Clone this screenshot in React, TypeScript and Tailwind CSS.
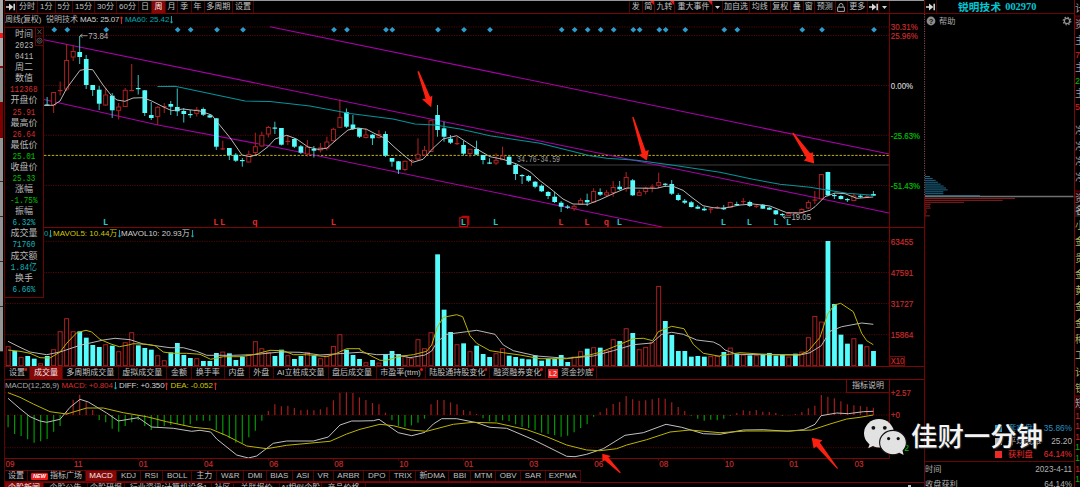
import type { ReactNode } from "react";

const STEP = 6.506;
const X0 = 8.1;
const xAt = (i: number) => X0 + i * STEP;

const CYAN = "#54fcfc";
const RED = "#b42222";
const GRID = "#5c0808";
const FRAME = "#7c0505";

// side, high, body top, body bottom, low; first entry is week index 6
const candles = `c 97 104.5 105.5 106|r 92 92.5 105 113|r 81.5 90 91.5 95.5|r 44 60.5 89 91|r 45.5 51.5 57 61|c 36 52 57 64|c 55 59 85 89|c 85 85 90 96|c 86 89.7 103.7 110|r 88 95 105 106|c 93 95.7 110.3 118|r 103 107 110.3 119.5|r 88 90.3 106.5 107|r 64 90 91 91|c 75 88 89 94.5|c 90 90.3 113 116|c 102 115 118 120|r 106 107.3 116.5 125|r 103 106 107 113|c 101 104 106.7 115|c 88.5 107 111.3 116|c 108 111 114 122.5|c 110 114 115 118|r 107 110 113.3 116.5|c 107.5 109 114.7 116|c 114 115.3 117.5 118|c 118 118.3 146.7 150|r 140.7 148.3 149.3 150|c 148 148 155.3 160|c 153 154.7 160.7 162|c 158 160 161.3 166.7|r 150.7 154.5 162 162.5|r 132.7 146.7 152.5 155|r 131.7 135.3 146 147|r 126 127.5 134 137.5|c 121.7 127.5 128.5 134|c 128 128 144.7 145.5|r 135 140.8 142.3 145|c 138 139 146.7 148|c 145 146.3 152.7 154|r 140 147 154 156.5|c 146 149 150.7 157.5|r 143 148 150 152.5|r 136.7 142 148 150.5|r 127.7 129.3 140.7 141.5|r 99.3 117.6 127.3 128|c 108.5 112 126.7 128|c 115 124.5 129 130|c 128 128.3 136.7 138|r 128.3 135 137.5 138.5|c 134 134.7 138.3 145|r 130 134.5 137.5 138.5|c 131.3 134 155.7 157|c 158 158 161.7 166.7|c 161 161.3 169.7 174|r 160.5 161.3 169.5 171|r 159 160 161 165.7|r 138.3 154.3 159 161|r 146 150.3 155 156|r 119.5 120.7 151.5 152|c 105 115 130 136.7|c 121.7 128.3 136.7 141.7|c 135 138.7 142.7 144|r 136.7 143 144 145|c 140.7 145 153.7 155.3|r 149 149.3 153.5 157.3|c 140.7 149 154.7 155|c 155 155 160 164.3|c 158.3 162.5 163.8 164|r 153.3 160.3 163 165|r 146.7 156 159.7 160|c 156 156.7 164.7 165|c 164 165 174 180|c 174 175 176.3 184|c 175 176 180.7 182|c 181 181.7 186.7 188.3|c 184.3 185.7 191.3 192|c 191 192 196 199|c 191.7 196.7 202 203|c 201 202.7 206.7 212|c 205 206.5 207.5 209|r 205 206.3 208.3 211|r 198 200.5 204.2 205|c 193.7 200 202.3 206|r 188.3 191.5 202 203|c 188.3 192 194.7 196|r 190 192.8 195 196.7|r 181 187.5 192.5 196.7|c 181 186.7 189.3 190|r 172 177.5 188.5 191.7|c 179 180.3 195.3 196|r 190 192.7 195.3 196|r 186.7 188.3 191.5 194.3|r 184.3 186.5 188 192.3|r 172.7 182.5 185.3 188.3|c 183 183.7 184.7 187|c 180 184 193.7 195|c 193.3 195 200 201|c 199 200.7 202.7 204|c 201 202.3 207 207.5|c 205 206.7 208.7 209|c 206.7 208.7 210.3 211|r 208 208.5 210 213.3|r 206 207 208 209|c 205 207.7 209.3 210|r 201.7 202.5 207.5 208|c 201.7 204 205 206|r 198 201 202 204|c 200.7 202 206 207|r 205 205.7 206.7 208|c 204 204.7 208.7 209|c 207 207.7 209.7 210|c 210 210.3 214.3 215|c 213 214 215.3 216.7|r 212 213.5 215.5 216|r 212 212.5 213.5 214|r 208.3 209.5 213 213.5|r 200.3 202.5 208 209|r 191 199.5 200.5 204|r 174 174.5 198.8 199.5|c 171.7 172 195.3 196.3|c 193 195 196 199|c 195 196 199 199.5|c 198 199 200.3 202|r 193.3 196 200.5 201|c 194 195.7 196.7 198|r 195 196 197 198|c 191 194 195.7 196`
  .split("|")
  .map((row) => {
    const [side, ...n] = row.split(" ");
    return { up: side === "r", v: n.map(Number) };
  });

// bar tops in thirds of a pixel below y = 230
const volumes = `349r 363c 381r 378c 386c 400r 378c 358r 304r 265r 304r 304c 323c 345c 351c 343r 347c 364r 337r 307r 346c 354c 359c 376r 391r 367c 339c 375c 384c 385r 393c 393c 369c 365r 370c 390c 380c 374r 334r 355r 366r 378c 359c 376r 387c 378c 366r 377c 385r 377r 348r 313r 359c 375c 387c 397r 390c 398r 372c 363c 372c 376r 385r 328r 355r 307r 73c 239c 306c 343r 340c 364r 347c 372c 381c 370r 355r 377c 381c 386c 388c 376c 392c 387c 387c 375c 396c 380r 364r 356c 352r 353c 361r 328r 333c 295r 309c 358r 351r 337r 168r 273c 315c 363c 363c 380c 378c 380c 378r 378r 366c 353r 371c 374r 376c 376r 373c 369c 377c 374c 380r 371c 365r 322r 258r 275r 33c 222c 314c 341c 325r 343c 349r 363c`
  .split(" ")
  .map((s) => ({ up: s.endsWith("r"), y: 230 + parseInt(s, 10) / 3 }));

const macdBars =
  `592 612 618 628 638 634 627 605 588 543 509 494 517 540 570 577 596 605 588 577 570 588 600 592 588 585 582 588 583 572 572 572 600 615 625 638 640 622 602 572 543 523 529 527 534 541 539 541 538 532 511 488 487 489 502 510 519 523 548 571 588 590 586 578 566 523 510 510 517 523 540 544 552 565 574 575 571 573 583 590 594 601 608 612 616 620 617 607 594 583 560 546 535 522 516 498 508 512 511 508 504 506 517 531 543 557 566 572 569 571 566 557 549 541 543 540 545 546 549 557 556 552 546 535 527 495 500 505 514 523 526 528 530 533`
    .split(" ")
    .map((s) => 230 + Number(s) / 3);

// converts samples taken in three side-by-side panels at triple scale
const seg = (ox: number, s: string) =>
  s
    .split(" ")
    .map((p) => {
      const [x, y] = p.split(",").map(Number);
      return `${(ox + x / 3).toFixed(1)},${(230 + y / 3).toFixed(1)}`;
    })
    .join(" ");

const volYellow = [
  seg(0, "24,360 60,364 90,370 120,383 150,384 180,366 200,340 230,308 258,301 275,306 300,328 330,341 358,350 385,345 400,341 440,343 465,347 490,366 515,370 560,370 600,373 632,388 670,380 720,380 760,374 810,361 850,362 880,374 920,374 980,380 1010,370 1040,356 1080,356"),
  seg(360, "0,360 30,376 60,391 80,391 120,379 160,374 200,364 215,345 232,292 250,262 290,254 308,260 330,317 350,340 390,362 430,368 480,375 540,386 620,386 680,377 720,367 770,347 820,326 850,325 878,332 895,305 935,289 972,296 1000,343 1030,370 1080,379"),
  seg(720, "0,377 60,368 120,372 180,374 240,374 265,363 300,322 323,252 343,225 362,220 400,245 425,310 440,332 460,344"),
].join(" ");
const volWhite = [
  seg(0, "24,334 60,352 90,366 140,374 180,366 240,346 310,330 345,325 390,329 430,342 510,353 550,353 590,364 620,376 700,376 760,374 840,366 900,367 960,375 1080,367"),
  seg(360, "50,374 100,373 150,383 195,375 215,363 232,335 260,313 320,305 350,301 405,313 430,345 460,362 530,378 620,385 700,378 760,362 820,344 875,339 905,313 935,307 970,313 1010,330 1060,336 1080,346"),
  seg(720, "15,360 50,373 120,374 240,375 270,368 304,347 330,304 365,290 425,279 460,283"),
].join(" ");
const diffLine = [
  seg(0, "24,505 60,536 90,560 120,573 140,577 180,568 210,532 240,508 265,516 320,549 355,573 415,563 455,591 520,595 575,604 600,601 632,606 650,627 710,675 745,684 770,678 820,640 860,633 940,633 985,621 1020,585 1055,573 1080,573"),
  seg(360, "40,572 57,568 80,584 115,608 155,617 195,607 220,582 245,566 290,566 350,578 390,592 440,595 520,629 620,679 645,680 680,673 730,656 795,616 850,608 918,583 965,592 1030,611 1080,613"),
  seg(720, "70,600 130,599 205,604 250,599 285,583 303,557 350,549 385,551 430,545 460,544"),
].join(" ");
const deaLine = [
  seg(0, "24,488 60,502 100,522 150,545 200,552 260,534 310,534 370,548 440,560 500,575 580,592 632,597 680,617 740,648 800,656 860,646 990,634 1040,612 1080,598"),
  seg(360, "60,583 100,587 150,600 200,604 280,583 340,577 410,579 500,599 560,620 620,645 680,660 720,662 770,656 800,645 860,629 930,606 990,600 1080,608"),
  seg(720, "80,603 200,603 275,600 330,582 380,567 420,562 460,555"),
].join(" ");

const ma5 =
  "44,105.3 53.3,105.3 60,101 66.7,88.3 80,70.3 86,69.3 92.7,69.7 103,85 111.7,96 117,100 125,101.3 133,98 143,97.7 151.7,101 163,106.7 171.7,110.7 183,109 200,111 211.7,115 218,123 230,137.7 242,155 250,156.7 258,154.3 268,146.7 275,139 286.7,135.3 296.7,139 308,147 318,149.3 326.7,148.3 340,136.7 348,130 358,128 366.7,129.3 375,133.7 385,138.3 395,147.7 406.7,157.7 412.7,162.3 423,159.3 433,148.3 443,139 456.7,135.7 466.7,142.3 478,149.7 490,156.7 503,159.3 516.7,164 530,171.7 540,180.7 550,188.3 563,199 573,204 588,204.3 600,199.7 613,193.7 626.7,188 656.7,188.3 665,186.3 673,186.3 683,190.3 693,198.3 703,205.7 713,207.7 723,208.3 740,205 753,204 770,206 786.7,212.7 800,213 810,210.3 815,206.7 825,196.7 835,193 845,193.7 856.7,198.3 873.3,197";
const ma60 =
  "157.5,86.5 175,86.3 207,93 245,101 270,101.5 310,106 350,113.5 393,119 415,124 435,125 460,129 490,135.7 540,143.3 590,155.7 606.7,158.3 636.7,160.3 673.3,165.3 720,172.3 753,179.3 780,184.3 810,187.3 847,193.3 873.3,195.3";

const diamonds = [54.3, 67.3, 106.3, 177.7, 190.7, 217, 243, 334, 347, 386, 392.3, 438, 464, 490, 561.7, 574.7, 587.7, 600.7, 613.7, 633.3, 639.7, 659.3, 665.7, 685.3, 724.3, 737.3, 802.3, 822, 874];
const marks: [number, string, string][] = [
  [105.7, "L", "#20c8c8"], [216, "L", "#e02828"], [222.7, "L", "#e02828"], [255, "q", "#e02828"], [333.3, "L", "#e02828"],
  [463.3, "L", "#20c8c8"], [495.7, "L", "#20c8c8"], [561, "L", "#e02828"], [587, "L", "#e02828"], [606.5, "q", "#e02828"],
  [619.5, "L", "#20c8c8"], [723.5, "L", "#20c8c8"], [749.5, "L", "#20c8c8"], [776, "L", "#20c8c8"], [788.7, "L", "#20c8c8"],
];

function Dotted({ y, color = GRID }: { y: number; color?: string }) {
  return <line x1={5} x2={889} y1={y} y2={y} stroke={color} strokeWidth={0.9} strokeDasharray="1.2 1.2" />;
}

function Axis({ y, fill, children, w }: { y: number; fill: string; children: ReactNode; w: number }) {
  return (
    <text x={890.8} y={y + 3} fill={fill} stroke={fill} strokeWidth={0.15} fontSize={8.5} textLength={w} lengthAdjust="spacingAndGlyphs">
      {children}
    </text>
  );
}

function PriceChart() {
  return (
    <svg className="block h-[202px] w-[920px] shrink-0 overflow-visible" viewBox="4 26 920 202">
      {[27, 35.5, 85.5, 135.3, 185.5].map((y) => (
        <Dotted key={y} y={y} />
      ))}
      <line x1={44} x2={889} y1={155.4} y2={155.4} stroke="#c4b400" strokeWidth={1} strokeDasharray="2.4 1.5" />
      <line x1={516} x2={889} y1={165} y2={165} stroke="#3e3e3e" strokeWidth={1.2} />
      <g fill="none" stroke="#a800a8" strokeWidth={1.1}>
        <polyline points="270,26.7 540,82 748,125 889.3,154" />
        <polyline points="44,39.7 270,86 460,125 540,141 810,196.5 889,213" />
        <polyline points="44,99.5 158,125 270,146 540,201.7 663,227.3" />
      </g>
      {candles.map(({ up, v }, k) => {
        const x = xAt(k + 6);
        const [h, t, b, l] = v;
        const doji = b - t <= 1.6;
        return (
          <g key={k}>
            <line x1={x} x2={x} y1={h} y2={up && !doji ? t : l} stroke={up ? RED : "#3cc4c4"} strokeWidth={1} />
            {up && !doji && <line x1={x} x2={x} y1={b} y2={Math.max(l, b)} stroke={RED} strokeWidth={1} />}
            {doji ? (
              <rect x={x - 2.3} y={t} width={4.6} height={1.2} fill={up ? RED : CYAN} />
            ) : up ? (
              <rect x={x - 2} y={t} width={4} height={b - t} fill="#000" stroke={RED} strokeWidth={0.95} />
            ) : (
              <rect x={x - 2.3} y={t} width={4.7} height={b - t} fill={CYAN} />
            )}
          </g>
        );
      })}
      <polyline points={ma60} fill="none" stroke="#04949c" strokeWidth={1.05} />
      <polyline points={ma5} fill="none" stroke="#c0c0c0" strokeWidth={0.95} />
      {diamonds.map((x) => (
        <path key={x} d={`M${x} 26.9l2.9 2.8l-2.9 2.8l-2.9 -2.8z`} fill="#2c9ccc" />
      ))}
      <path d="M80 35.7h7.5M82.5 34l-2.5 1.7l2.5 1.7" fill="none" stroke="#aaa" strokeWidth={0.8} />
      <text x={88.3} y={38.8} fill="#b4b4b4" fontSize={8.3} textLength={20} lengthAdjust="spacingAndGlyphs">73.84</text>
      <text x={517} y={162} fill="#a0a0a0" fontSize={8.6} fontFamily="Liberation Mono, monospace" textLength={43} lengthAdjust="spacingAndGlyphs">34.76-34.59</text>
      <path d="M783 217.3h8M785.5 215.6l-2.5 1.7l2.5 1.7" fill="none" stroke="#aaa" strokeWidth={0.8} />
      <text x={791.5} y={219.6} fill="#b4b4b4" fontSize={8.3} textLength={19.5} lengthAdjust="spacingAndGlyphs">19.05</text>
      <path d="M461.5 216.4h7.3v8.6M459.8 217.6h7.8v8.9h-7.8z" fill="none" stroke="#b80808" strokeWidth={1.2} />
      {marks.map(([x, t, c]) => (
        <text key={x} x={x} y={225.4} fill={c} fontSize={8.8} fontWeight="bold" textAnchor="middle" fontFamily="Liberation Mono, monospace">{t}</text>
      ))}
      <line x1={4.5} x2={924} y1={227.5} y2={227.5} stroke={FRAME} />
      <line x1={889.4} x2={889.4} y1={26} y2={228} stroke={FRAME} />
      <Axis y={27} fill="#cc2c2c" w={27}>30.31%</Axis>
      <Axis y={35.7} fill="#cc2c2c" w={27}>25.96%</Axis>
      <Axis y={85.6} fill="#d0d0d0" w={22.3}>0.00%</Axis>
      <Axis y={136} fill="#00c400" w={29.3}>-25.63%</Axis>
      <Axis y={186} fill="#00c400" w={29.3}>-51.43%</Axis>
      <g fill="#fc2010">
        <path d="M417.4 71.5L419 71.3L430.2 97L432.4 95.5L431.2 107.2L422 99.2L425.6 98.8Z" />
        <path d="M632.2 117.2L633.6 117L645.8 151.3L648.8 149.8L646.8 160.4L638.5 155L641.6 153.8Z" />
        <path d="M792.2 133.3L793.6 132.8L810.2 153.2L812.8 152.2L814.2 163.4L803.8 160.6L806.4 158Z" />
      </g>
    </svg>
  );
}

function VolumeChart() {
  return (
    <svg className="block h-[126px] w-[920px] shrink-0 overflow-visible" viewBox="4 240 920 126">
      {[241.3, 272.5, 303.5, 334.7].map((y) => (
        <Dotted key={y} y={y} />
      ))}
      {volumes.map(({ up, y }, i) =>
        up ? (
          <rect key={i} x={xAt(i) - 2} y={y + 0.4} width={4} height={365.3 - y} fill="#000" stroke={RED} strokeWidth={0.95} />
        ) : (
          <rect key={i} x={xAt(i) - 2.3} y={y} width={4.8} height={366 - y} fill={CYAN} />
        ),
      )}
      <polyline points={volWhite} fill="none" stroke="#c0c0c0" strokeWidth={0.95} />
      <polyline points={volYellow} fill="none" stroke="#bcb400" strokeWidth={1} />
      <line x1={889.4} x2={889.4} y1={240} y2={366} stroke={FRAME} />
      <Axis y={241.5} fill="#cc2c2c" w={22.5}>63455</Axis>
      <Axis y={272.7} fill="#cc2c2c" w={22.5}>47591</Axis>
      <Axis y={303.7} fill="#cc2c2c" w={22.5}>31727</Axis>
      <Axis y={335} fill="#cc2c2c" w={22.5}>15864</Axis>
      <rect x={890} y={356.5} width={14.5} height={9} fill="none" stroke={FRAME} />
      <Axis y={361} fill="#cc2c2c" w={13.5}>X10</Axis>
    </svg>
  );
}

const dates: [number, string][] = [
  [5.3, "09"], [73.5, "11"], [138.5, "01"], [203.7, "04"], [269, "06"], [334, "08"], [399, "10"], [464, "01"],
  [529, "03"], [594, "06"], [659, "08"], [724.5, "10"], [789, "01"], [854.2, "03"],
];

function MacdChart() {
  return (
    <svg className="relative z-10 block h-[78px] w-[920px] shrink-0 overflow-visible" viewBox="4 392 920 78">
      {[392.7, 415, 447.7].map((y) => (
        <Dotted key={y} y={y} />
      ))}
      {macdBars.map((y, i) => (
        <line key={i} x1={xAt(i)} x2={xAt(i)} y1={415} y2={y} stroke={y < 415 ? "#a41c1c" : "#009800"} strokeWidth={1.2} />
      ))}
      <polyline points={diffLine} fill="none" stroke="#c0c0c0" strokeWidth={1} />
      <polyline points={deaLine} fill="none" stroke="#bcb400" strokeWidth={1} />
      <line x1={889.4} x2={889.4} y1={392} y2={458.5} stroke={FRAME} />
      <line x1={4.5} x2={889.4} y1={458.5} y2={458.5} stroke={FRAME} />
      {dates.map(([x, t]) => (
        <g key={x}>
          <line x1={x - 0.3} x2={x - 0.3} y1={458} y2={460.5} stroke={FRAME} />
          <text x={x + 0.2} y={467} fill="#cc2c2c" stroke="#cc2c2c" strokeWidth={0.15} fontSize={8.5} textLength={9} lengthAdjust="spacingAndGlyphs">{t}</text>
        </g>
      ))}
      <Axis y={393.3} fill="#cc2c2c" w={20}>+2.57</Axis>
      <Axis y={415} fill="#cc2c2c" w={9}>+0</Axis>
      <Axis y={447.7} fill="#00c400" w={18}>-3.72</Axis>
      <g fill="#fc2010">
        <path d="M602.3 453.8L610.9 456L608.4 457.6L620.9 472.6L619.6 472.9L605 460.4L602.4 461.2Z" />
        <path d="M811.7 437.8L822.4 440.2L819.8 442.6L838.1 468.4L837 468.8L816.4 446.6L813.6 448.6Z" />
      </g>
    </svg>
  );
}

type Cell = { w: number; t: ReactNode; on?: boolean; dot?: boolean; red?: boolean };

function Tabs({ cells }: { cells: Cell[] }) {
  return (
    <>
      {cells.map((c, i) => (
        <div
          key={i}
          style={{ width: c.w }}
          className={`relative flex h-full shrink-0 items-center justify-center border-r border-[#4c0404] whitespace-nowrap ${c.on ? "bg-[#840808] text-[#f4e8e8]" : "text-[#c0c0c0]"}`}
        >
          {c.t}
          {c.dot && <span className="absolute top-[1px] right-[2px] size-[2.5px] rounded-full bg-[#f01010]" />}
          {c.red && (
            <svg className="absolute top-0 right-0 size-[4px]" viewBox="0 0 4 4"><path d="M0 0h4v4z" fill="#f01010" /></svg>
          )}
        </div>
      ))}
    </>
  );
}

const GoIcon = () => (
  <svg className="h-[8px] w-[9px]" viewBox="0 0 9 8">
    <path d="M0 4h3.5M8.2 .7v6.6" stroke="#d8d8d8" strokeWidth="1.5" />
    <path d="M3 .6L7.4 4L3 7.4z" fill="#d8d8d8" />
  </svg>
);
const Caret = () => (
  <svg className="h-[3px] w-[5px]" viewBox="0 0 5 3"><path d="M0 0h5L2.5 3z" fill="#d0d0d0" /></svg>
);
const Lock = () => (
  <svg className="h-[9px] w-[8px]" viewBox="0 0 8 9" fill="none" stroke="#b8b8b8" strokeWidth=".9">
    <path d="M.6 4.2h6.8v4.2H.6zM2 4V2.5a2 2 0 0 1 4 0V4" />
  </svg>
);
const Up = () => (
  <svg className="ml-[1px] h-[8px] w-[3px] shrink-0" viewBox="0 0 3 8" fill="none" stroke="#f02828" strokeWidth=".9">
    <path d="M1.5 8V1M.2 2.6L1.5 .8L2.8 2.6" />
  </svg>
);
const Down = () => (
  <svg className="ml-[1px] h-[8px] w-[3px] shrink-0" viewBox="0 0 3 8" fill="none" stroke="#18b0c0" strokeWidth=".9">
    <path d="M1.5 0v7M.2 5.4L1.5 7.2L2.8 5.4" />
  </svg>
);

const periods: Cell[] = [
  { w: 12, t: <GoIcon /> }, { w: 21, t: "分时" }, { w: 17.5, t: "1分" }, { w: 17.5, t: "5分" }, { w: 22, t: "15分" },
  { w: 22, t: "30分" }, { w: 22, t: "60分" }, { w: 13, t: "日" }, { w: 14, t: "周", on: true }, { w: 12, t: "月" },
  { w: 13.5, t: "季" }, { w: 13, t: "年" }, { w: 28.5, t: "多周期" }, { w: 21, t: "设置" },
];
const tools: Cell[] = [
  { w: 12.5, t: "发" }, { w: 12.5, t: "简", red: true }, { w: 20, t: "九转", red: true }, { w: 38, t: "重大事件", red: true },
  { w: 10, t: <Caret /> }, { w: 27, t: "加自选" }, { w: 20.5, t: "均线" }, { w: 20.5, t: "复权" }, { w: 12.5, t: "叠" },
  { w: 11.5, t: "窗" }, { w: 20.5, t: "预测" }, { w: 12, t: <Lock /> }, { w: 20.5, t: "更多" }, { w: 11, t: <GoIcon /> }, { w: 11, t: <Caret /> },
];
const volTabs: Cell[] = [
  { w: 25, t: "设置", dot: true }, { w: 33, t: "成交量", on: true }, { w: 55.5, t: "多周期成交量" }, { w: 48.5, t: "虚拟成交量" },
  { w: 25, t: "金额" }, { w: 32.5, t: "换手率" }, { w: 25, t: "内盘" }, { w: 24.5, t: "外盘" }, { w: 54.5, t: "AI立桩成交量" },
  { w: 48, t: "盘后成交量" }, { w: 49, t: "市盈率(ttm)", dot: true }, { w: 64.5, t: "陆股通持股变化", dot: true },
  { w: 55.5, t: "融资融券变化", dot: true },
  { w: 51, dot: true, t: (<><span className="mr-[3px] bg-[#f02828] px-px text-[7px] leading-[9px] text-white">L2</span>资金抄底</>) },
];
const indTabs: Cell[] = [
  { w: 23, t: "设置" },
  { w: 58, t: (<><span className="mr-[2px] rounded-[1px] bg-[#f01818] px-[2px] text-[5.5px] leading-[7px] font-bold text-white italic">NEW</span>指标广场</>) },
  { w: 31, t: "MACD", on: true }, { w: 24, t: "KDJ" }, { w: 22, t: "RSI" }, { w: 29.3, t: "BOLL" }, { w: 25, t: "主力" },
  { w: 27, t: "W&R" }, { w: 22.4, t: "DMI" }, { w: 26.3, t: "BIAS" }, { w: 20.7, t: "ASI" }, { w: 20, t: "VR" },
  { w: 30.6, t: "ARBR" }, { w: 26, t: "DPO" }, { w: 26, t: "TRIX" }, { w: 33, t: "新DMA" }, { w: 22, t: "BBI" },
  { w: 25, t: "MTM" }, { w: 25, t: "OBV" }, { w: 24.4, t: "SAR" }, { w: 35, t: "EXPMA" },
];
const newsTabs: Cell[] = [
  { w: 39, t: "个股新闻", on: true }, { w: 44, t: "个股公告" }, { w: 37, t: "个股研报" }, { w: 87, t: "行业资讯[计算机设备]" },
  { w: 22, t: "社区" }, { w: 46, t: "关联报价" }, { w: 42, t: "AI相似个股" }, { w: 44, t: "产品价格" },
];

const W = "text-[#b8b8b8]";
const R = "text-[#d42c2c]";
const G = "text-[#00c000]";
const C = "text-[#14b4bc]";
const stats: [string, string, boolean?][] = [
  ["时间", W, true], ["2023", W], ["0411", W], ["周二", W, true],
  ["数值", W, true], ["112368", R], ["开盘价", W, true], ["25.91", R],
  ["最高价", W, true], ["26.64", R], ["最低价", W, true], ["25.01", G],
  ["收盘价", W, true], ["25.33", G], ["涨幅", W, true], ["-1.75%", G],
  ["振幅", W, true], ["6.32%", C], ["成交量", W, true], ["71760", C],
  ["成交额", W, true], ["1.84亿", C], ["换手", W, true], ["6.66%", C],
];

function StatPanel() {
  return (
    <div className="absolute top-[27px] left-[4px] z-20 flex h-[271px] w-[40px] flex-col items-center border border-[#6c0404] bg-black pt-[1px]">
      {stats.map(([t, c, label], i) => (
        <div
          key={i}
          className={`h-[11.09px] leading-[11.09px] whitespace-nowrap ${c} ${label ? "text-[9px]" : "scale-x-[0.82] font-['Liberation_Mono','Noto_Sans_CJK_SC',monospace] text-[9.3px]"}`}
        >
          {t}
        </div>
      ))}
      <svg className="absolute -top-px right-[-1px] h-[19px] w-[9px]" viewBox="0 0 9 19" fill="none" stroke="#6c0404">
        <path d="M.5 .5h8v18h-8zM.5 9h8" />
        <path d="M2.5 2.5l4 4.5M6.5 2.5l-4 4.5" stroke="#666" strokeWidth=".8" />
        <circle cx="4.5" cy="13.7" r="2.6" stroke="#666" strokeWidth=".8" />
        <circle cx="4.5" cy="13.7" r="1" stroke="#666" strokeWidth=".7" />
      </svg>
    </div>
  );
}

const chipBlue = [347, 360, 368, 377, 384, 392, 401, 408, 413, 400, 400, 510];
const chipRed = [615, 578, 462, 362, 360, 362, 350, 351, 348, 360, 346];

function RightPanel() {
  return (
    <div className="flex h-[487px] w-[150px] shrink-0 flex-col">
      <div className="flex h-[14px] shrink-0 items-center border-b border-l border-[#6c0404]">
        <div className="flex h-full w-[12px] items-center justify-center border-r border-[#4c0404]"><GoIcon /></div>
        <div className="flex flex-1 pl-[21px] text-[10.6px] leading-[12px] font-bold whitespace-nowrap text-[#00c8d4]">
          <span className="mr-[4px] tracking-[0.2px]">锐明技术</span>
          <span className="font-['Liberation_Serif',serif] text-[10.4px]">002970</span>
        </div>
      </div>
      <svg className="block h-[406px] w-[150px] shrink-0" viewBox="924 14 150 406">
        <line x1={924.6} x2={924.6} y1={14} y2={196} stroke="#8c5058" strokeDasharray="1.2 1.2" />
        <line x1={924.6} x2={924.6} y1={196} y2={420} stroke={FRAME} />
        <circle cx={931} cy={21} r={4.4} fill="#8c8c8c" />
        <text x={931} y={23.8} fontSize={7.6} fontWeight="bold" textAnchor="middle" fill="#111">?</text>
        <text x={939} y={24} fontSize={8.2} fill="#a8a8a8">帮助</text>
        <circle cx={1067} cy={21} r={2.6} fill="none" stroke="#909090" strokeWidth={1.2} />
        <circle cx={1067} cy={21} r={3.8} fill="none" stroke="#909090" strokeWidth={1.2} strokeDasharray="1.49 1.49" />
        {chipBlue.map((x, i) => (
          <line key={i} x1={925} x2={810 + x / 3} y1={174.6 + i * 1.91} y2={174.6 + i * 1.91} stroke="#1f6888" strokeWidth={1} />
        ))}
        {chipRed.map((x, i) => (
          <line key={i} x1={925} x2={810 + x / 3} y1={198.4 + i * 1.94} y2={198.4 + i * 1.94} stroke="#8c2222" strokeWidth={1} />
        ))}
        <line x1={925} x2={1073.5} y1={196.6} y2={196.6} stroke="#707070" strokeWidth={1.5} />
      </svg>
      <div className="flex h-[42px] shrink-0 flex-col border-b border-l border-[#6c0404] pt-[2px] pr-[2px] pl-[70px] text-[8.3px] leading-[13px]">
        <Legend box="bg-[#2c9ccc]" name="套牢盘" value="35.86%" color="text-[#2890c0]" />
        <Legend box="bg-[#b4b4b4]" name="平均成本" value="25.20" color="text-[#b4b4b4]" />
        <Legend box="bg-[#f02828]" name="获利盘" value="64.14%" color="text-[#f02c2c]" />
      </div>
      <div className="flex h-[25px] shrink-0 flex-col overflow-hidden border-l border-[#6c0404] pr-[2px] text-[8.2px] text-[#b0b0b0]">
        <div className="flex h-[15.5px] shrink-0 items-center justify-between"><span>时间</span><span>2023-4-11</span></div>
        <div className="flex h-[15.5px] shrink-0 items-center justify-between"><span>收盘获利</span><span>64.14%</span></div>
      </div>
    </div>
  );
}

function Legend({ box, name, value, color }: { box: string; name: string; value: string; color: string }) {
  return (
    <div className={`flex h-[13px] shrink-0 items-center whitespace-nowrap ${color}`}>
      <span className={`mr-[6px] size-[7px] ${box}`} />
      <span>{name}</span>
      <span className="ml-auto">{value}</span>
    </div>
  );
}

// label, center y, colour
const edge: [string, number, string][] = [
  ["计", 8.5, "#a0a0a0"], ["资", 24, "#909090"], ["主", 40, "#a0a0a0"], ["7", 54.5, "#e02020"], ["主", 67, "#a0a0a0"],
  ["2", 80.5, "#00c000"], ["主", 93, "#a0a0a0"], ["5", 106, "#e02020"], ["净", 130, "#909090"], ["净", 146, "#909090"],
  ["净", 161.5, "#909090"], ["净", 177, "#909090"], ["资", 198, "#909090"], ["名", 210.5, "#b0b0b0"],
  ["小", 225.5, "#b4b45c"], ["金", 241.5, "#b4b45c"], ["贵", 258, "#b4b45c"], ["金", 274, "#b4b45c"], ["黄", 290, "#b4b45c"],
  ["金", 306.5, "#b4b45c"], ["金", 323, "#b4b45c"], ["稀", 339, "#b4b45c"], ["工", 355.5, "#b4b45c"], ["计", 372, "#b4b45c"],
  ["锂", 388, "#b4b45c"], ["短", 403.5, "#a0a0a0"], ["1", 415, "#d02020"], ["1", 425.5, "#d02020"], ["1", 436, "#d02020"],
  ["1", 446.5, "#00b000"], ["1", 457, "#00b000"], ["1", 468, "#d02020"], ["1", 478.5, "#00b000"],
];

function EdgeStrip() {
  return (
    <svg className="block h-[487px] w-[6px] shrink-0" viewBox="1074 0 6 487">
      <rect x={1074} y={16} width={6} height={13} fill="#280404" />
      <rect x={1074} y={191} width={6} height={12} fill="#280404" />
      <rect x={1074} y={204} width={6} height={13} fill="#1c1c1c" />
      <rect x={1074} y={396} width={6} height={14} fill="#280404" />
      <line x1={1074.5} x2={1074.5} y1={0} y2={487} stroke={FRAME} />
      {[16, 191, 396].map((y) => (
        <line key={y} x1={1074} x2={1080} y1={y} y2={y} stroke={FRAME} />
      ))}
      {edge.map(([t, y, c], i) => (
        <text key={i} x={1075} y={y + 3.6} fontSize={t.charCodeAt(0) < 128 ? 9 : 10} fill={c}>{t}</text>
      ))}
    </svg>
  );
}

function LeftSliver() {
  return (
    <div className="flex h-[487px] w-[4px] shrink-0 flex-col pr-[1px]">
      <div className="h-[33px] bg-[#a8a8a8]" />
      <div className="h-[5px] bg-[#f01818]" />
      <div className="h-[28px] bg-[#a8a8a8]" />
      <div className="h-[2px] bg-[#801010]" />
      <div className="h-[34px] bg-[#8c8c8c]" />
      <div className="h-[36px] bg-[#800000]" />
      {[44, 35, 45, 45, 45].map((h, i) => (
        <div key={i} style={{ height: h }} className="border-b border-[#303030] bg-[#949494]" />
      ))}
    </div>
  );
}

function Watermark() {
  return (
    <div className="absolute top-[416px] left-[862px] z-30 flex items-center">
      <svg className="h-[42px] w-[48px] shrink-0" viewBox="862 416 48 42">
        <ellipse cx={879} cy={433.2} rx={15} ry={14.2} fill="#e2e2e2" />
        <path d="M870 443l-1.8 5.2l6.3-3z" fill="#e2e2e2" />
        <circle cx={873.4} cy={427.8} r={1.9} fill="#111" />
        <circle cx={884.8} cy={427.8} r={1.9} fill="#111" />
        <ellipse cx={893} cy={442.6} rx={13.4} ry={12.2} fill="#e2e2e2" stroke="#111" strokeWidth={1.1} />
        <path d="M899 452.5l4.6 2.4l-1.2-5z" fill="#e2e2e2" />
        <circle cx={888.6} cy={438.6} r={1.6} fill="#111" />
        <circle cx={898.2} cy={438.6} r={1.6} fill="#111" />
      </svg>
      <span className="ml-[1px] text-[26.4px] leading-[42px] font-medium whitespace-nowrap text-[#f4f4f4] [text-shadow:1px_1px_1px_#333]">佳财一分钟</span>
    </div>
  );
}

const Reading = ({ w, c, children }: { w: number; c: string; children: ReactNode }) => (
  <span style={{ width: w }} className={`flex shrink-0 items-center ${c}`}>
    {children}
  </span>
);

export default function App() {
  return (
    <div className="relative flex h-[487px] w-[1080px] overflow-hidden bg-black font-['Liberation_Sans','Noto_Sans_CJK_SC',sans-serif] text-[8px]">
      <LeftSliver />
      <div className="flex h-[487px] w-[920px] shrink-0 flex-col border-l border-[#5c0404]">
        <div className="flex h-[14px] shrink-0 justify-between border-y border-t-[#989898] border-b-[#7c0505] pr-[34px]">
          <div className="flex h-full"><Tabs cells={periods} /></div>
          <div className="flex h-full border-l border-[#4c0404]"><Tabs cells={tools} /></div>
        </div>
        <div className="flex h-[12px] w-[885px] shrink-0 items-center border-r border-[#7c0505] whitespace-nowrap text-[#b8b8b8]">
          <span className="w-[41px] tracking-[-0.2px]">周线(复权)</span>
          <span className="w-[34px]">锐明技术</span>
          <Reading w={45} c="text-[#d0d0d0] text-[8px] tracking-[-0.15px]">MA5: 25.07<Up /></Reading>
          <Reading w={52} c="text-[#00a8b0] text-[8px] tracking-[-0.1px]">MA60: 25.42<Down /></Reading>
        </div>
        <div className="-ml-px"><PriceChart /></div>
        <div className="flex h-[12px] w-[885px] shrink-0 items-center border-r border-[#7c0505] pl-[39px] text-[8px] whitespace-nowrap">
          <Reading w={9} c="text-[#00a0a8]">0<Down /></Reading>
          <Reading w={68} c="text-[#d0c800]">MAVOL5: 10.44万<Down /></Reading>
          <Reading w={74} c="text-[#d0d0d0]">MAVOL10: 20.93万<Down /></Reading>
        </div>
        <div className="-ml-px"><VolumeChart /></div>
        <div className="flex h-[14px] shrink-0 border-y border-[#7c0505]"><Tabs cells={volTabs} /></div>
        <div className="flex h-[12px] w-[885px] shrink-0 items-center border-r border-[#7c0505] text-[8px] tracking-[-0.12px] whitespace-nowrap">
          <Reading w={56.5} c="text-[#a8a8a8]">MACD(12,26,9)</Reading>
          <Reading w={57.5} c="text-[#dc2c2c]">MACD: +0.804<Down /></Reading>
          <Reading w={51.5} c="text-[#d4d4d4]">DIFF: +0.350<Up /></Reading>
          <Reading w={50} c="text-[#d0c800]">DEA: -0.052<Up /></Reading>
          <span className="ml-auto flex h-[13px] w-[43px] items-center justify-center border-b border-l border-[#7c0505] tracking-normal text-[#c0c0c0]">指标说明</span>
        </div>
        <div className="-ml-px"><MacdChart /></div>
        <div className="flex h-[12px] shrink-0">
          <div className="flex h-[12px] border-y border-[#6c0404]"><Tabs cells={indTabs} /></div>
        </div>
        <div className="h-[5px] shrink-0 overflow-hidden border-t border-[#7c0505]">
          <div className="flex h-[10px]"><Tabs cells={newsTabs} /><span className="mt-[2px] ml-[542px] h-[6px] w-[3px] bg-[#c0c0c0]" /></div>
        </div>
      </div>
      <RightPanel />
      <EdgeStrip />
      <StatPanel />
      <Watermark />
    </div>
  );
}
